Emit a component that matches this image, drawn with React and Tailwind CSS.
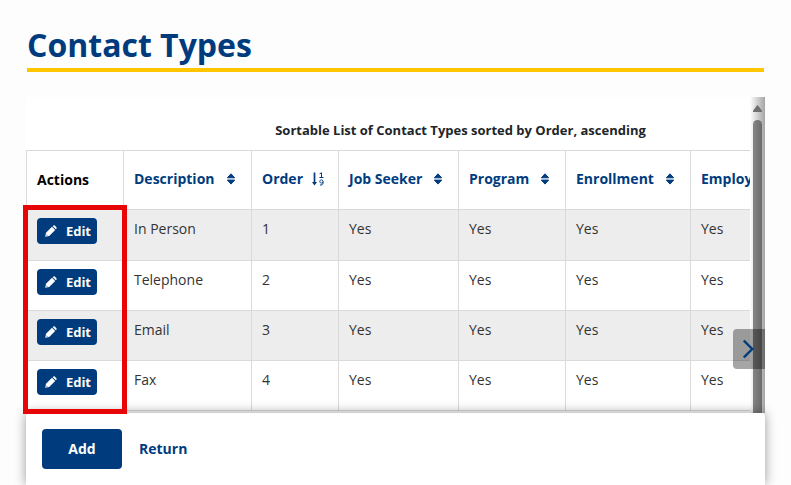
import React from "react";

const columns = [
  { label: "Description", width: 128 },
  { label: "Order", width: 87, sorted: true },
  { label: "Job Seeker", width: 120 },
  { label: "Program", width: 107 },
  { label: "Enrollment", width: 125 },
  { label: "Employer", width: 120 },
];

const rows = [
  { name: "In Person", order: 1 },
  { name: "Telephone", order: 2 },
  { name: "Email", order: 3 },
  { name: "Fax", order: 4 },
];

function SortIcon() {
  return (
    <svg viewBox="0 0 12 12" className="size-3" fill="currentColor" aria-hidden="true">
      <path d="M7 0.8 10.7 4.8H3.3ZM3.3 7.1H10.7L7 11.1Z" stroke="currentColor" strokeWidth="1" strokeLinejoin="round" />
    </svg>
  );
}

function SortNumericIcon() {
  return (
    <svg viewBox="0 0 12 16" className="h-4 w-3" fill="none" stroke="currentColor" aria-hidden="true">
      <path d="M2.5 1.5V13" strokeWidth="1.7" />
      <path d="M0 11H5L2.5 14.6Z" fill="currentColor" stroke="none" />
      <path d="M7.6 2.8 9.5 1.8V6.4M7.5 6.5H11.5" strokeWidth="1" />
      <path d="M11 10.6A1.6 1.6 0 1 1 11 10.4V12C11 13.6 9.6 14.4 8 13.9" strokeWidth="1" />
    </svg>
  );
}

function PencilIcon() {
  return (
    <svg viewBox="0 0 12 12" className="size-3" fill="currentColor" aria-hidden="true">
      <path d="M0.2 11.8 1 7.8 7 1.8 10.2 5 4.2 11Z" />
      <path d="M7.7 1.2 8.4 0.5Q9.1 0 9.8 0.6L11.4 2.2Q12 2.9 11.5 3.6L10.8 4.3Z" />
      <path d="M1.1 9.6 2.4 10.9" stroke="#003c7d" strokeWidth="0.7" />
    </svg>
  );
}

function ContactTable() {
  return (
    <table className="w-[785px] table-fixed border-collapse text-sm text-[#333]">
      <caption className="h-[53px] pt-6 pl-[84px] text-center text-[13px] leading-[18px] font-bold text-[#212529]">
        Sortable List of Contact Types sorted by Order, ascending
      </caption>
      <colgroup>
        <col className="w-[97px]" />
        {columns.map((c) => (
          <col key={c.label} style={{ width: c.width }} />
        ))}
      </colgroup>
      <thead>
        <tr className="h-[59px]">
          <th className="border border-[#dadada] px-[10px] text-left font-bold text-black">Actions</th>
          {columns.map((c) => (
            <th key={c.label} className="border border-[#dadada] px-[10px] pb-[2px] text-left text-[#003c7d]">
              <button type="button" className="flex items-center gap-[9px] font-bold whitespace-nowrap">
                {c.label}
                {c.sorted ? <SortNumericIcon /> : <SortIcon />}
              </button>
            </th>
          ))}
        </tr>
      </thead>
      <tbody>
        {rows.map((r) => (
          <tr key={r.name} className="h-[50px] align-top first:h-[51px] odd:bg-[#ededed]">
            <td className="border border-[#dadada] px-[10px] pt-2">
              <button
                type="button"
                className="flex h-[26px] w-[60px] items-center justify-between rounded-[4px] bg-[#003c7d] pr-[6px] pl-2 text-[13px] font-bold text-white"
              >
                <PencilIcon />
                Edit
              </button>
            </td>
            <td className="border border-[#dadada] px-[10px] pt-[9px]">{r.name}</td>
            <td className="border border-[#dadada] px-[10px] pt-[9px]">{r.order}</td>
            {columns.slice(2).map((c) => (
              <td key={c.label} className="border border-[#dadada] px-[10px] pt-[9px]">
                Yes
              </td>
            ))}
          </tr>
        ))}
      </tbody>
    </table>
  );
}

export default function App() {
  return (
    <main className="flex h-screen flex-col overflow-hidden bg-[#fdfdfd] px-[26px] font-['Open_Sans','Noto_Sans',sans-serif]">
      <h1 className="mr-px ml-px border-b-4 border-[#ffc600] pt-[23px] pb-px text-[32px] leading-[44px] font-bold text-[#003c7d]">
        Contact Types
      </h1>
      <section className="relative mt-[25px] flex min-h-0 flex-1">
        <div className="min-w-0 flex-1 overflow-hidden bg-white">
          <ContactTable />
        </div>
        <div className="flex w-[15px] flex-col items-center bg-linear-to-r from-white to-[#a5a5a5] pt-2" aria-hidden="true">
          <svg viewBox="0 0 9 7" className="h-[7px] w-[9px]" fill="#707070">
            <path d="M3.9 0.5Q4.5 0 5.1 0.5L9 5.8V7H0V5.8Z" />
          </svg>
          <div className="mt-2 w-[9px] flex-1 rounded-t-full bg-linear-to-r from-[#858585] to-[#6b6b6b]" />
        </div>
        <button
          type="button"
          aria-label="Scroll right"
          className="absolute right-0 bottom-11 flex h-10 w-8 items-center justify-center rounded-l-[4px] bg-black/35 text-[#003c7d]"
        >
          <svg viewBox="0 0 12 20" className="h-5 w-3" fill="none" stroke="currentColor" strokeWidth="2.4" aria-hidden="true">
            <path d="M0.8 1.5 9.3 10 0.8 18.5" />
          </svg>
        </button>
        <div className="pointer-events-none absolute top-[108px] -left-[3px] z-20 h-[209px] w-[104px] border-[5px] border-[#e80505]" />
      </section>
      <footer className="z-10 flex h-[72px] shrink-0 items-start gap-[17px] rounded-t-[4px] bg-white px-4 pt-4 shadow-[0_0_12px_rgba(0,0,0,0.4)]">
        <button type="button" className="h-10 w-20 rounded-[4px] bg-[#003c7d] text-sm font-bold text-white">
          Add
        </button>
        <a href="#return" className="flex h-10 items-center text-sm font-bold text-[#003c7d]">
          Return
        </a>
      </footer>
    </main>
  );
}
